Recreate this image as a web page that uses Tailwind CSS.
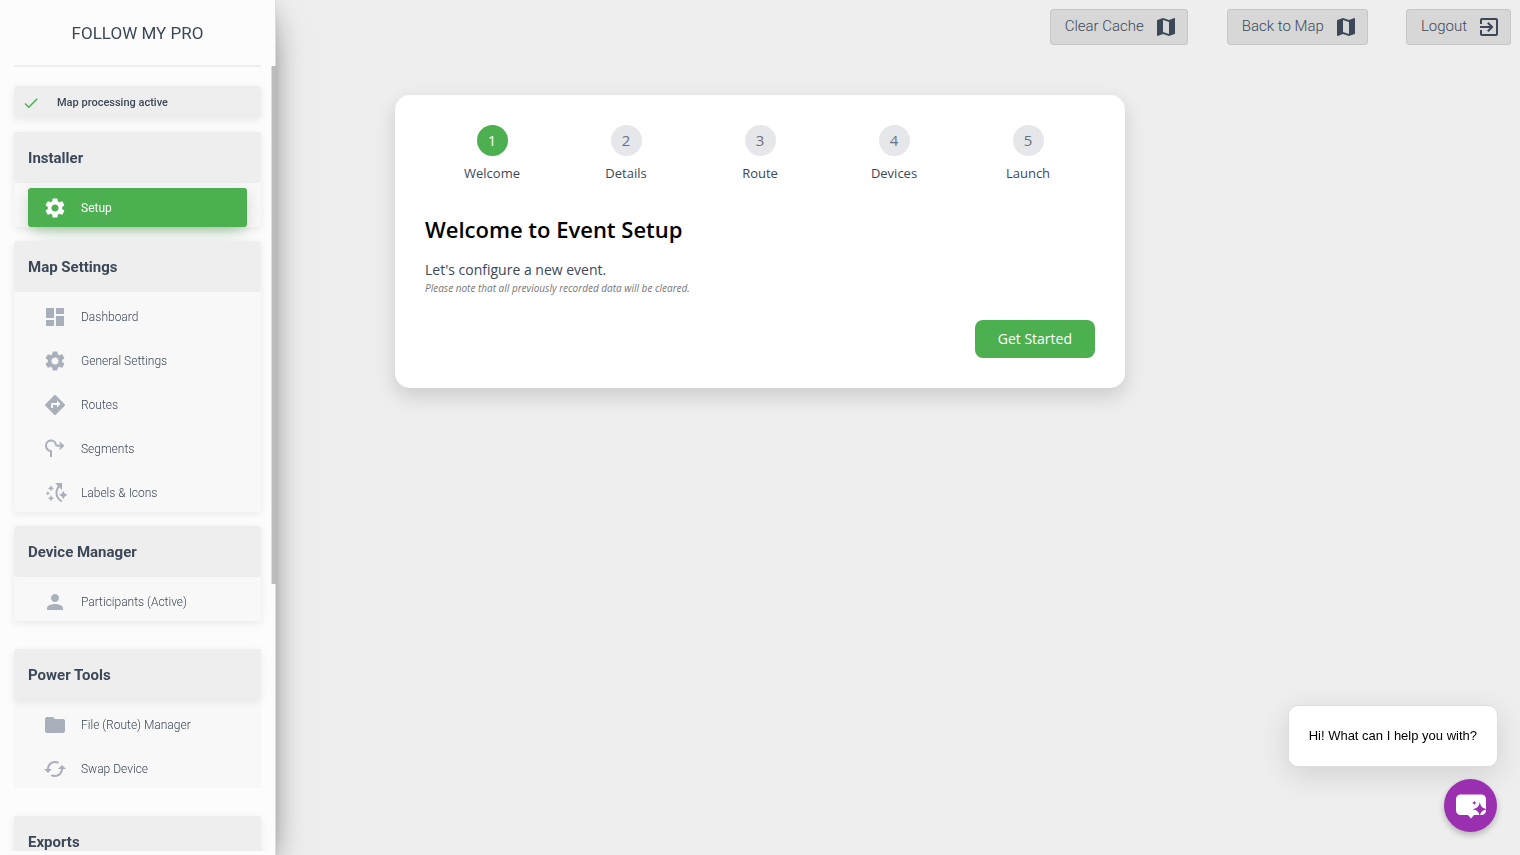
<!DOCTYPE html>
<html lang="en">
<head>
  <meta charset="UTF-8" />
  <meta name="viewport" content="width=device-width, initial-scale=1.0" />
  <title>Follow My Pro - Event Setup</title>
  <script src="https://cdn.jsdelivr.net/npm/@tailwindcss/browser@4"></script>
</head>
<body class="min-h-screen bg-[#eeeeee] font-['Roboto',sans-serif] text-[#3c4858]">

  <!-- Icons used more than once -->
  <svg class="hidden">
    <symbol id="icon-settings" viewBox="0 0 24 24"><path d="M19.14 12.94c.04-.3.06-.61.06-.94 0-.32-.02-.64-.07-.94l2.03-1.58c.18-.14.23-.41.12-.61l-1.92-3.32c-.12-.22-.37-.29-.59-.22l-2.39.96c-.5-.38-1.03-.7-1.62-.94l-.36-2.54c-.04-.24-.24-.41-.48-.41h-3.84c-.24 0-.43.17-.47.41l-.36 2.54c-.59.24-1.13.57-1.62.94l-2.39-.96c-.22-.08-.47 0-.59.22L2.74 8.87c-.12.21-.08.47.12.61l2.03 1.58c-.05.3-.09.63-.09.94s.02.64.07.94l-2.03 1.58c-.18.14-.23.41-.12.61l1.92 3.32c.12.22.37.29.59.22l2.39-.96c.5.38 1.03.7 1.62.94l.36 2.54c.05.24.24.41.48.41h3.84c.24 0 .44-.17.47-.41l.36-2.54c.59-.24 1.13-.56 1.62-.94l2.39.96c.22.08.47 0 .59-.22l1.92-3.32c.12-.22.07-.47-.12-.61l-2.01-1.58zM12 15.6c-1.98 0-3.6-1.62-3.6-3.6s1.62-3.6 3.6-3.6 3.6 1.62 3.6 3.6-1.62 3.6-3.6 3.6z"/></symbol>
    <symbol id="icon-map" viewBox="0 0 24 24"><path d="M20.5 3l-.16.03L15 5.1 9 3 3.36 4.9c-.21.07-.36.25-.36.48V20.5c0 .28.22.5.5.5l.16-.03L9 18.9l6 2.1 5.64-1.9c.21-.07.36-.25.36-.48V3.5c0-.28-.22-.5-.5-.5zM15 19l-6-2.11V5l6 2.11V19z"/></symbol>
  </svg>

  <!-- Sidebar -->
  <aside class="fixed inset-y-0 left-0 z-10 flex w-[276px] flex-col border-r border-[#dddddd] bg-[#fcfcfc] pb-1 shadow-[0_16px_38px_-12px_rgba(0,0,0,0.56),0_4px_25px_0_rgba(0,0,0,0.12),0_8px_10px_-5px_rgba(0,0,0,0.2)]">
    <div class="mx-3.5 flex h-[67px] shrink-0 items-center justify-center border-b-2 border-[#eeeeee]">
      <a href="#" class="text-[17px] leading-6">FOLLOW MY PRO</a>
    </div>

    <nav class="flex-1 overflow-hidden px-3.5 pt-[19px]">
      <div class="mb-3.5 flex h-8 items-center gap-[17px] rounded-[3px] bg-[#eeeeee] px-2 pt-0.5 text-[11px] leading-[18px] font-medium shadow-[0_2px_8px_rgba(0,0,0,0.08)]">
        <svg class="size-[18px] fill-[#4caf50]" viewBox="0 0 24 24"><path d="M9 16.17L4.83 12l-1.42 1.41L9 19 21 7l-1.41-1.41z"/></svg>
        <span>Map processing active</span>
      </div>

      <section class="mb-3.5 bg-[#f8f8f8] shadow-[0_2px_8px_rgba(0,0,0,0.08)]">
        <h2 class="flex h-[51px] items-center rounded-[3px] bg-[#eeeeee] px-3.5 pt-px text-[15px] leading-6 font-bold">Installer</h2>
        <ul class="px-3.5">
          <li class="pt-[5px]">
            <a href="#" class="flex h-[39px] items-center gap-3.5 rounded-[3px] bg-[#4caf50] px-[15px] text-[12px] text-white shadow-[0_12px_20px_-10px_rgba(76,175,80,0.28),0_4px_16px_0_rgba(0,0,0,0.12),0_7px_8px_-5px_rgba(76,175,80,0.2)]">
              <svg class="size-6 fill-white"><use href="#icon-settings"/></svg>
              Setup
            </a>
          </li>
        </ul>
      </section>

      <section class="mb-3.5 bg-[#f8f8f8] shadow-[0_2px_8px_rgba(0,0,0,0.08)]">
        <h2 class="flex h-[51px] items-center rounded-[3px] bg-[#eeeeee] px-3.5 pt-px text-[15px] leading-6 font-bold">Map Settings</h2>
        <ul class="px-3.5 text-[12px] font-light">
          <li class="pt-[5px]">
            <a href="#" class="flex h-[39px] items-center gap-3.5 px-[15px]">
              <svg class="size-6 fill-[#a9afbb]" viewBox="0 0 24 24"><path d="M3 13h8V3H3v10zm0 8h8v-6H3v6zm10 0h8V11h-8v10zm0-18v6h8V3h-8z"/></svg>
              Dashboard
            </a>
          </li>
          <li class="pt-[5px]">
            <a href="#" class="flex h-[39px] items-center gap-3.5 px-[15px]">
              <svg class="size-6 fill-[#a9afbb]"><use href="#icon-settings"/></svg>
              General Settings
            </a>
          </li>
          <li class="pt-[5px]">
            <a href="#" class="flex h-[39px] items-center gap-3.5 px-[15px]">
              <svg class="size-6 fill-[#a9afbb]" viewBox="0 0 24 24"><path d="M21.71 11.29l-9-9c-.39-.39-1.02-.39-1.41 0l-9 9c-.39.39-.39 1.02 0 1.41l9 9c.39.39 1.02.39 1.41 0l9-9c.39-.38.39-1.01 0-1.41zM14 14.5V12h-4v3H8v-4c0-.55.45-1 1-1h5V7.5l3.5 3.5-3.5 3.5z"/></svg>
              Routes
            </a>
          </li>
          <li class="pt-[5px]">
            <a href="#" class="flex h-[39px] items-center gap-3.5 px-[15px]">
              <svg class="size-6" viewBox="0 0 24 24">
                <path class="fill-none stroke-[#a9afbb] stroke-2" d="M8 20V14.300C5 13.600 3 11.300 3 8.500a5 5 0 0 1 9.900-1c.2 1 .6 1.300 1.400 1.300H19"/>
                <path class="fill-[#a9afbb]" d="M16.800 4.500L21.500 8.800 16.800 13l-.3-2.800h1.500V7.400h-1.500z"/>
              </svg>
              Segments
            </a>
          </li>
          <li class="pt-[5px]">
            <a href="#" class="flex h-[39px] items-center gap-3.5 px-[15px]">
              <svg class="size-6" viewBox="0 0 24 24">
                <path class="fill-none stroke-[#a9afbb] stroke-2" d="M17 4C12.500 8.500 11.500 16 18.800 20.500"/>
                <path class="fill-[#a9afbb]" d="M12 2h7v7zM8 4l1 2.200 2.200 1-2.200 1-1 2.200-1-2.200-2.200-1 2.200-1zM4.800 9.900l.7 1.600 1.600.7-1.600.7-.7 1.600-.7-1.600-1.600-.7 1.600-.7zM8 14l1 2.200 2.200 1-2.200 1-1 2.200-1-2.200-2.200-1 2.200-1zM20.300 9.800l1.400 2.800 2.800 1.400-2.800 1.400-1.400 2.800-1.400-2.800-2.800-1.400 2.800-1.400z"/>
              </svg>
              Labels &amp; Icons
            </a>
          </li>
        </ul>
      </section>

      <section class="mb-7 bg-[#f8f8f8] shadow-[0_2px_8px_rgba(0,0,0,0.08)]">
        <h2 class="flex h-[51px] items-center rounded-[3px] bg-[#eeeeee] px-3.5 pt-px text-[15px] leading-6 font-bold">Device Manager</h2>
        <ul class="px-3.5 text-[12px] font-light">
          <li class="pt-[5px]">
            <a href="#" class="flex h-[39px] items-center gap-3.5 px-[15px]">
              <svg class="size-6 fill-[#a9afbb]" viewBox="0 0 24 24"><path d="M12 12c2.21 0 4-1.79 4-4s-1.790-4-4-4-4 1.790-4 4 1.790 4 4 4zm0 2c-2.670 0-8 1.340-8 4v2h16v-2c0-2.660-5.330-4-8-4z"/></svg>
              Participants (Active)
            </a>
          </li>
        </ul>
      </section>

      <section class="mb-7 bg-[#f8f8f8]">
        <h2 class="flex h-[51px] items-center rounded-[3px] bg-[#eeeeee] px-3.5 pt-px text-[15px] leading-6 font-bold shadow-[0_2px_8px_rgba(0,0,0,0.08)]">Power Tools</h2>
        <ul class="px-3.5 text-[12px] font-light">
          <li class="pt-[5px]">
            <a href="#" class="flex h-[39px] items-center gap-3.5 px-[15px]">
              <svg class="size-6 fill-[#a9afbb]" viewBox="0 0 24 24"><path d="M10 4H4c-1.100 0-1.990.9-1.990 2L2 18c0 1.100.9 2 2 2h16c1.100 0 2-.9 2-2V8c0-1.100-.9-2-2-2h-8l-2-2z"/></svg>
              File (Route) Manager
            </a>
          </li>
          <li class="pt-[5px]">
            <a href="#" class="flex h-[39px] items-center gap-3.5 px-[15px]">
              <svg class="size-6 fill-[#a9afbb]" viewBox="0 0 24 24"><path d="M19 8l-4 4h3c0 3.310-2.690 6-6 6-1.010 0-1.970-.25-2.800-.7l-1.460 1.460C8.970 19.540 10.430 20 12 20c4.420 0 8-3.580 8-8h3l-4-4zM6 12c0-3.310 2.690-6 6-6 1.010 0 1.970.25 2.800.7l1.460-1.460C15.030 4.460 13.570 4 12 4c-4.420 0-8 3.580-8 8H1l4 4 4-4H6z"/></svg>
              Swap Device
            </a>
          </li>
        </ul>
      </section>

      <section class="bg-[#f8f8f8]">
        <h2 class="flex h-[51px] items-center rounded-[3px] bg-[#eeeeee] px-3.5 pt-px text-[15px] leading-6 font-bold shadow-[0_2px_8px_rgba(0,0,0,0.08)]">Exports</h2>
      </section>
    </nav>

    <!-- Scrollbar thumb -->
    <div class="absolute -right-px top-[66px] h-[518px] w-[5px] border-l border-[#dddddd] bg-[#bcbcbc]"></div>
  </aside>

  <!-- Top actions -->
  <header class="flex justify-end px-[9px] pt-[9px]">
    <button class="mr-[39px] flex h-9 items-center gap-2.5 rounded-[3px] border border-[#c6c6c6] bg-[#d7d7d7] px-3.5 text-[15px] font-light">
      <span class="pb-0.5">Clear Cache</span>
      <svg class="-mr-[5px] size-6 fill-[#3c4858]"><use href="#icon-map"/></svg>
    </button>
    <button class="mr-[38px] flex h-9 items-center gap-2.5 rounded-[3px] border border-[#c6c6c6] bg-[#d7d7d7] px-3.5 text-[15px] font-light">
      <span class="pb-0.5">Back to Map</span>
      <svg class="-mr-[5px] size-6 fill-[#3c4858]"><use href="#icon-map"/></svg>
    </button>
    <button class="flex h-9 items-center gap-2.5 rounded-[3px] border border-[#c6c6c6] bg-[#d7d7d7] px-3.5 text-[15px] font-light">
      <span class="pb-0.5">Logout</span>
      <svg class="-mr-[5px] size-6 fill-[#3c4858]" viewBox="0 0 24 24"><path d="M10.090 15.590L11.500 17l5-5-5-5-1.410 1.410L12.670 11H3v2h9.670l-2.580 2.590zM19 3H5c-1.110 0-2 .9-2 2v4h2V5h14v14H5v-4H3v4c0 1.100.89 2 2 2h14c1.100 0 2-.9 2-2V5c0-1.100-.9-2-2-2z"/></svg>
    </button>
  </header>

  <!-- Setup wizard -->
  <main class="mx-auto mt-[50px] w-full max-w-[730px] rounded-[15px] bg-white p-[30px] font-['Open_Sans',sans-serif] shadow-[0_8px_20px_rgba(0,0,0,0.15)]">
    <ol class="grid grid-cols-5 text-center text-[13px]">
      <li class="flex flex-col items-center gap-2">
        <span class="flex size-[31px] items-center justify-center rounded-full bg-[#4caf50] text-[15px] text-white">1</span>
        Welcome
      </li>
      <li class="flex flex-col items-center gap-2">
        <span class="flex size-[31px] items-center justify-center rounded-full bg-gray-200 text-[15px] text-gray-500">2</span>
        Details
      </li>
      <li class="flex flex-col items-center gap-2">
        <span class="flex size-[31px] items-center justify-center rounded-full bg-gray-200 text-[15px] text-gray-500">3</span>
        Route
      </li>
      <li class="flex flex-col items-center gap-2">
        <span class="flex size-[31px] items-center justify-center rounded-full bg-gray-200 text-[15px] text-gray-500">4</span>
        Devices
      </li>
      <li class="flex flex-col items-center gap-2">
        <span class="flex size-[31px] items-center justify-center rounded-full bg-gray-200 text-[15px] text-gray-500">5</span>
        Launch
      </li>
    </ol>

    <h1 class="mt-[30px] text-[22px] leading-[30px] font-semibold text-black">Welcome to Event Setup</h1>
    <p class="mt-[15px] text-[14px] leading-[22px]">Let's configure a new event.</p>
    <p class="text-[10px] leading-[15px] text-[#777777] italic">Please note that all previously recorded data will be cleared.</p>

    <div class="mt-6 flex justify-end">
      <button class="h-[38px] rounded-lg bg-[#4caf50] px-[23px] text-[14px] text-white">Get Started</button>
    </div>
  </main>

  <!-- Chat widget -->
  <div class="fixed right-[22px] bottom-[23px] flex flex-col items-end gap-3">
    <div class="rounded-[10px] border border-[#dddddd] bg-white px-5 py-5 font-['Liberation_Sans',sans-serif] text-[13px] leading-[20px] text-black shadow-[0_8px_30px_rgba(0,0,0,0.12)]">Hi! What can I help you with?</div>
    <button aria-label="Open chat" class="mr-px flex size-[53px] items-center justify-center rounded-full bg-[#9a2fb0] shadow-[0_3px_6px_rgba(0,0,0,0.25)]">
      <svg class="h-[26px] w-[30px]" viewBox="0 0 30 26">
        <path class="fill-white" d="M4.500 1.500h21A4.500 4.500 0 0 1 30 6v11.500a4.500 4.500 0 0 1-4.500 4.500H18l-3 3.500-3-3.500H4.500A4.500 4.500 0 0 1 0 17.500V6a4.500 4.500 0 0 1 4.500-4.500z"/>
        <path class="fill-[#9a2fb0]" d="M23.800 9c1 4.800 2.400 6.200 7.200 7.200-4.800 1-6.200 2.400-7.200 7.200-1-4.800-2.400-6.200-7.200-7.200 4.800-1 6.200-2.400 7.200-7.200zM18.300 7.800c.4 1.300.9 1.800 2.200 2.200-1.300.4-1.800.9-2.200 2.200-.4-1.300-.9-1.800-2.200-2.200 1.300-.4 1.800-.9 2.200-2.200z"/>
      </svg>
    </button>
  </div>

</body>
</html>
